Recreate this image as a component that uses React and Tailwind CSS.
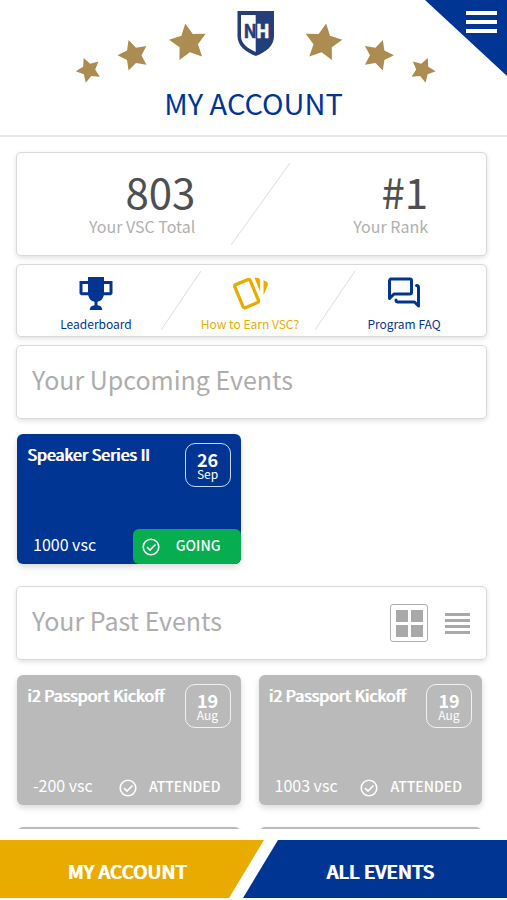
import React, { useState } from 'react';

const pastEvents = [
  { id: 1, title: 'i2 Passport Kickoff', day: '19', month: 'Aug', points: '-200 vsc' },
  { id: 2, title: 'i2 Passport Kickoff', day: '19', month: 'Aug', points: '1003 vsc' },
  { id: 3, title: 'i2 Passport Kickoff', day: '19', month: 'Aug', points: '500 vsc' },
  { id: 4, title: 'i2 Passport Kickoff', day: '19', month: 'Aug', points: '750 vsc' },
];

const stars = [
  { x: 88.7, y: 70, r: 13, turn: -23 },
  { x: 133.5, y: 55.3, r: 16, turn: -18 },
  { x: 188.3, y: 42.7, r: 19.5, turn: -9 },
  { x: 323.1, y: 42.7, r: 19.5, turn: 9 },
  { x: 377.9, y: 55.3, r: 16, turn: 18 },
  { x: 422.7, y: 70, r: 13, turn: 23 },
];

const starPoints = ({ x, y, r, turn }) =>
  Array.from({ length: 10 }, (_, i) => {
    const radius = i % 2 === 0 ? r : r * 0.5;
    const angle = ((turn - 90 + i * 36) * Math.PI) / 180;
    return `${(x + radius * Math.cos(angle)).toFixed(2)},${(y + radius * Math.sin(angle)).toFixed(2)}`;
  }).join(' ');

const Emblem = () => (
  <svg width="364" height="76" viewBox="72 8 364 76" role="img" aria-label="NH">
    {stars.map((star) => (
      <polygon key={star.x} points={starPoints(star)} fill="#ac8c51" />
    ))}
    <path d="M237.5 11h36.5v25c0 10-8 16-18.2 20-10.3-4-18.3-10-18.3-20z" fill="#233f7a" />
    <path d="M241 15h14.7v37c-8-3.5-14.7-8.5-14.7-16z" fill="#fff" />
    <text x="243.5" y="37.500" fontSize="18" fontWeight="700" fill="#233f7a" stroke="#233f7a" strokeWidth="0.5" fontFamily="'Liberation Sans Narrow', 'Noto Sans CJK SC', sans-serif">
      N
    </text>
    <text x="256" y="37.500" fontSize="18" fontWeight="700" fill="#fff" stroke="#fff" strokeWidth="0.5" fontFamily="'Liberation Sans Narrow', 'Noto Sans CJK SC', sans-serif">
      H
    </text>
  </svg>
);

const TrophyIcon = () => (
  <svg width="40" height="40" viewBox="-3 -3 40 40" fill="currentColor">
    <path
      fillRule="evenodd"
      d="M9 0h16v4h8.500v12.500L32 18.300h-7.200c-.8 3.700-3 5.900-6.300 6.500v3.500c3 .3 4.500 1.700 4.800 4.700H10.700c.3-3 1.800-4.400 4.800-4.700v-3.500c-3.300-.6-5.500-2.800-6.300-6.500H2L.5 16.500V4H9zM3.500 7v8.300H9V7zM25 7v8.300h5.500V7z"
    />
  </svg>
);

const CardsIcon = () => (
  <svg width="40" height="40" viewBox="0 0 24 24" fill="currentColor">
    <path d="M11.19,2.25C10.93,2.25 10.67,2.31 10.42,2.4L3.06,5.45C2.04,5.87 1.55,7.04 1.97,8.05L6.93,20C7.24,20.77 7.97,21.23 8.74,21.25C9,21.25 9.27,21.22 9.53,21.1L16.9,18.05C17.65,17.74 18.11,17 18.13,16.27C18.14,16 18.09,15.71 18,15.45L13,3.5C12.71,2.73 11.97,2.26 11.19,2.25M14.67,2.25L18.12,10.6V4.25A2,2 0 0,0 16.12,2.25M20.13,3.79V12.82L22.56,6.96C22.97,5.94 22.5,4.78 21.47,4.36M11.19,4.22L16.17,16.24L8.78,19.3L3.8,7.29" />
  </svg>
);

const ForumIcon = () => (
  <svg width="40" height="40" viewBox="-3 -3 40 40" fill="none" stroke="currentColor" strokeWidth="3" strokeLinejoin="round" strokeLinecap="round">
    <path d="M3.500 2H23q1.500 0 1.500 1.500v12q0 1.500-1.500 1.500H7l-4.500 4.500V3.500z" />
    <path d="M29.500 8.500q2 0 2 2V29l-4-4H11q-2 0-2-2" />
  </svg>
);

const CheckIcon = () => (
  <svg width="18" height="18" viewBox="0 0 18 18" fill="none" stroke="currentColor" strokeWidth="1.6">
    <circle cx="9" cy="9" r="7.8" />
    <path d="M5 9.2l3 2.9 5.500-5.600" />
  </svg>
);

const quickLinks = [
  { label: 'Leaderboard', icon: TrophyIcon, color: 'text-[#003594]' },
  { label: 'How to Earn VSC?', icon: CardsIcon, color: 'text-[#e9ab00]' },
  { label: 'Program FAQ', icon: ForumIcon, color: 'text-[#003594]' },
];

const Panel = ({ className, children }) => (
  <section className={`rounded-[5px] border border-[#d9d9d9] bg-white shadow-[0_2px_5px_rgba(0,0,0,0.12)] ${className}`}>
    {children}
  </section>
);

const EventCard = ({ event, going }) => (
  <article
    className={`flex h-[130px] flex-col justify-between overflow-hidden rounded-md text-white shadow-[0_3px_6px_rgba(0,0,0,0.15)] ${
      going ? 'bg-[#003594]' : 'bg-[#bababa]'
    }`}
  >
    <div className="flex items-start justify-between pt-[9px] pr-[10px] pl-[10px]">
      <h3 className="text-base leading-[22px] [text-shadow:1px_0_0_currentColor]">{event.title}</h3>
      <time className="flex h-[44px] w-[46px] flex-col items-center rounded-[10px] border border-white/80 pt-[6px]">
        <span className="text-lg leading-[18px] font-bold">{event.day}</span>
        <span className="text-xs leading-3">{event.month}</span>
      </time>
    </div>
    <div className="flex items-center justify-between pl-4">
      <span className="pb-[5px] text-base">{event.points}</span>
      <span
        className={`flex h-[35px] items-center rounded-md pr-5 text-sm font-medium ${
          going ? 'gap-4 bg-[#07ae50] pl-[9px]' : 'gap-3'
        }`}
      >
        <CheckIcon />
        <span className="pb-[3px]">{going ? 'GOING' : 'ATTENDED'}</span>
      </span>
    </div>
  </article>
);

const App = () => {
  const [view, setView] = useState('grid');

  return (
    <div className="flex h-screen flex-col bg-white pb-[2px] font-['Noto_Sans_CJK_SC','Noto_Sans',sans-serif]">
      <header className="relative flex h-[137px] shrink-0 flex-col items-center border-b-2 border-[#e8e8e8] pt-2">
        <Emblem />
        <h1 className="text-[29px] leading-9 text-[#003594]">MY ACCOUNT</h1>
        <button
          type="button"
          aria-label="Menu"
          className="absolute top-0 right-0 flex h-[76px] w-[82px] flex-col items-end gap-[5px] bg-[#003594] pt-[11px] pr-[10px] [clip-path:polygon(0_0,100%_0,100%_100%)]"
        >
          <span className="h-[4px] w-[31px] bg-white" />
          <span className="h-[4px] w-[31px] bg-white" />
          <span className="h-[4px] w-[31px] bg-white" />
        </button>
      </header>

      <main className="min-h-0 flex-1 overflow-y-auto pt-[15px] pr-5 pl-4 [scrollbar-width:none]">
        {/* Totals */}
        <Panel className="flex h-[104px] items-center pr-[58px] pl-[72px]">
          <div className="text-right">
            <p className="text-[42px] leading-10 text-[#4f4f4f]">803</p>
            <p className="pt-[3px] text-base text-[#b0b0b0]">Your VSC Total</p>
          </div>
          <svg className="ml-9" width="59" height="82" viewBox="0 0 59 82" stroke="#dcdcdc">
            <path d="M0 82L59 0" />
          </svg>
          <div className="ml-auto text-right">
            <p className="text-[42px] leading-10 text-[#4f4f4f]">#1</p>
            <p className="pt-[3px] text-base text-[#b0b0b0]">Your Rank</p>
          </div>
        </Panel>

        {/* Quick links */}
        <Panel className="mt-2 h-[73px]">
          <nav className="grid h-full grid-cols-3 pr-[5px] pl-[2px]">
            {quickLinks.map(({ label, icon: Icon, color }, index) => (
              <a key={label} href="#" className={`relative flex flex-col items-center pt-[9px] ${color}`}>
                <Icon />
                <span className="text-xs leading-5 whitespace-nowrap">{label}</span>
                {index < 2 && (
                  <svg className="absolute top-[6px] -right-7" width="40" height="59" viewBox="0 0 40 59" stroke="#dcdcdc">
                    <path d="M0 59L40 0" />
                  </svg>
                )}
              </a>
            ))}
          </nav>
        </Panel>

        <Panel className="mt-2 flex h-[74px] items-center px-[15px] pb-[5px]">
          <h2 className="text-[25px] text-[#adadad]">Your Upcoming Events</h2>
        </Panel>

        <div className="mt-[15px] grid grid-cols-2 gap-x-[18px] pr-[5px] pl-px">
          <EventCard going event={{ title: 'Speaker Series II', day: '26', month: 'Sep', points: '1000 vsc' }} />
        </div>

        <Panel className="mt-[22px] flex h-[74px] items-center justify-between pr-[10px] pl-[15px]">
          <h2 className="pb-[5px] text-[25px] text-[#adadad]">Your Past Events</h2>
          <div className="flex items-center gap-[10px]">
            <button
              type="button"
              aria-label="Grid view"
              onClick={() => setView('grid')}
              className={`flex size-[38px] items-center justify-center rounded-[3px] border ${
                view === 'grid' ? 'border-[#adadad]' : 'border-transparent'
              }`}
            >
              <svg width="27" height="27" viewBox="0 0 27 27" fill="#a9a9a9">
                <path d="M0 0h12v12H0zM15 0h12v12H15zM0 15h12v12H0zM15 15h12v12H15z" />
              </svg>
            </button>
            <button
              type="button"
              aria-label="List view"
              onClick={() => setView('list')}
              className={`flex size-[38px] items-center justify-center rounded-[3px] border ${
                view === 'list' ? 'border-[#adadad]' : 'border-transparent'
              }`}
            >
              <svg className="shrink-0" width="25" height="21" viewBox="0 0 25 21" fill="#a9a9a9">
                <path d="M0 0h25v3H0zM0 6h25v3H0zM0 12h25v3H0zM0 18h25v3H0z" />
              </svg>
            </button>
          </div>
        </Panel>

        <div
          className={`mt-[15px] grid gap-x-[18px] gap-y-[22px] pr-[5px] pb-4 pl-px ${
            view === 'grid' ? 'grid-cols-2' : 'grid-cols-1'
          }`}
        >
          {pastEvents.map((event) => (
            <EventCard key={event.id} event={event} />
          ))}
        </div>
      </main>

      <nav className="mt-[11px] flex h-[58px] shrink-0 text-[19px] text-white [text-shadow:1px_0_0_currentColor]">
        <a
          href="#"
          className="flex flex-1 items-center justify-center bg-[#e9ab00] pt-[5px] pr-[10px] font-medium [clip-path:polygon(0_0,100%_0,calc(100%-35px)_100%,0_100%)]"
        >
          MY ACCOUNT
        </a>
        <a
          href="#"
          className="-ml-[21px] flex flex-1 items-center justify-center bg-[#003594] pt-[5px] pl-[10px] font-medium [clip-path:polygon(35px_0,100%_0,100%_100%,0_100%)]"
        >
          ALL EVENTS
        </a>
      </nav>
    </div>
  );
};

export default App;
